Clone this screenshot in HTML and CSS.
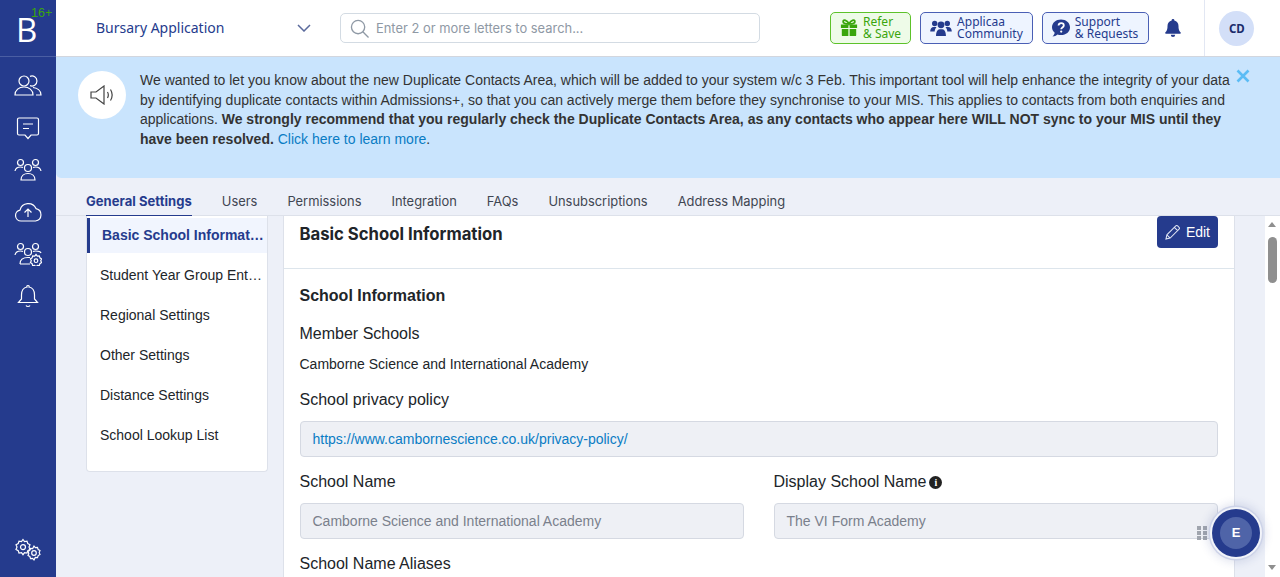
FILE: index.html
```html
<!DOCTYPE html>
<html lang="en">
  <head>
    <meta charset="UTF-8" />
    <meta name="viewport" content="width=device-width, initial-scale=1.0" />
    <title>General Settings</title>
    <link rel="stylesheet" href="styles.css">
  </head>
  <body>
    <aside class="sidebar">
      <div class="logo">
        <span class="logo-letter">B</span>
        <span class="logo-age">16+</span>
      </div>
      <nav class="side-icons">
        <svg viewBox="0 0 28 24"><circle cx="10" cy="7" r="5"/><path d="M1 21c0-5 4-8 9-8s9 3 9 8z"/><path d="M16 2.400a5 5 0 1 1 0 9.200"/><path d="M19 13.500c4 .5 8 3 8 7.500h-5"/></svg>
        <svg viewBox="0 0 24 24"><path d="M3 2h18a1.500 1.500 0 0 1 1.500 1.500v14a1.500 1.500 0 0 1-1.500 1.500h-6l-3 3.500-3-3.500H3a1.500 1.500 0 0 1-1.500-1.500v-14A1.500 1.500 0 0 1 3 2z"/><path d="M7 8h10M7 12.500h6"/></svg>
        <svg viewBox="0 0 28 24"><circle cx="6.500" cy="4.500" r="3"/><circle cx="21.500" cy="4.500" r="3"/><circle cx="14" cy="10" r="3.500"/><path d="M1 13c.5-2.500 2.500-4 5.500-4 1 0 2 .2 2.500.5M27 13c-.5-2.500-2.500-4-5.500-4-1 0-2 .2-2.500.5"/><path d="M7 22c0-4 3-6.500 7-6.500s7 2.500 7 6.500z"/></svg>
        <svg viewBox="0 0 28 24"><path d="M7 21a5.500 5.500 0 0 1-1-10.900A8.500 8.500 0 0 1 22 8.600a6.300 6.300 0 0 1-.5 12.400z"/><path d="M14 17V9M10.500 12.500 14 9l3.500 3.500"/></svg>
        <svg viewBox="0 0 28 24"><circle cx="6.500" cy="4.500" r="3"/><circle cx="21.500" cy="4.500" r="3"/><circle cx="14" cy="10" r="3.500"/><path d="M1 13c.5-2.500 2.500-4 5.500-4 1 0 2 .2 2.500.5M27 11c-.5-1.500-2.500-2-5.500-2-1 0-2 .2-2.500.5"/><path d="M6 22c0-4 3-6.500 8-6.500h2M6 22h10"/><path d="M22 12.500l1.300 1.600 2-.3.600 2 1.700 1.200-.9 1.800.9 1.800-1.700 1.100-.6 2-2-.3-1.300 1.600-1.300-1.600-2 .3-.6-2-1.700-1.100.9-1.800-.9-1.800 1.700-1.200.6-2 2 .3z"/><circle cx="22" cy="18.700" r="1.800"/></svg>
        <svg viewBox="0 0 24 24"><path d="M12 1.500a1 1 0 0 1 1 1.500c4 .7 5.500 4 5.500 8v4l3 3.500h-19l3-3.500v-4c0-4 1.500-7.300 5.500-8a1 1 0 0 1 1-1.500z"/><path d="M10 21.500c.8 1.300 3.200 1.300 4 0"/></svg>
      </nav>
      <svg class="side-gears" viewBox="0 0 28 24"><path d="M9 1.500l1.500 2 2.500-.3.800 2.400 2.200 1.200-1 2.300 1 2.300-2.200 1.200-.8 2.400-2.500-.3-1.500 2-1.500-2-2.500.3-.8-2.400L2 11.400l1-2.300-1-2.300 2.200-1.200L5 3.200l2.500.3z"/><circle cx="9" cy="9.100" r="2.500"/><path d="M20 8l1.300 1.700 2.200-.2.700 2.100 1.800 1-.8 2 .8 2-1.800 1-.7 2.100-2.200-.2L20 22l-1.300-1.700-2.200.2-.7-2.100-1.800-1 .8-2-.8-2 1.800-1 .7-2.100 2.200.2z"/><circle cx="20" cy="15" r="2.300"/></svg>
    </aside>

    <div class="main">
      <header class="topbar">
        <div class="app-select">
          <span>Bursary Application</span>
          <svg viewBox="0 0 14 8"><path d="M1 1l6 6 6-6"/></svg>
        </div>
        <div class="search">
          <svg viewBox="0 0 20 20"><circle cx="8.500" cy="8.500" r="7"/><path d="M13.500 13.500l6 6"/></svg>
          <span>Enter 2 or more letters to search...</span>
        </div>
        <a class="top-btn refer">
          <svg viewBox="0 0 20 20"><path d="M1 6h8.300v4H1zM10.700 6H19v4h-8.300zM2 11h7.300v8H3a1 1 0 0 1-1-1zM10.700 11H18v7a1 1 0 0 1-1 1h-6.300z" fill="#3aa50c"/><path d="M10 5.500C8 1 3.500 0 3.500 3c0 2 3 2.500 6.500 2.500s6.500-.5 6.500-2.500c0-3-4.500-2-6.500 2.500z" fill="none" stroke="#3aa50c" stroke-width="2"/></svg>
          <span>Refer<br>&amp; Save</span>
        </a>
        <a class="top-btn community">
          <svg viewBox="0 0 24 20"><circle cx="5" cy="5" r="3"/><circle cx="19" cy="5" r="3"/><circle cx="12" cy="6.500" r="3.800"/><path d="M0 14c0-3 1.500-5 4-5h3c-1 1.500-2 3-2 5zM24 14c0-3-1.500-5-4-5h-3c1 1.500 2 3 2 5zM6.500 19c0-4 1.500-7.500 4-7.500h3c2.500 0 4 3.500 4 7.500z"/></svg>
          <span>Applicaa<br>Community</span>
        </a>
        <a class="top-btn">
          <svg viewBox="0 0 18 18"><path d="M9 0.500c5 0 9 3.200 9 7.800s-4 7.800-9 7.800c-1.300 0-2.500-.2-3.500-.6C4.300 16.500 2.500 17.500.5 17.500c1-1 2-2.300 2.200-3.800C1 12.300 0 10.400 0 8.300 0 3.700 4 .5 9 .5z"/><path d="M6.500 6.500C6.700 5 7.800 4.200 9.200 4.200c1.500 0 2.600.9 2.600 2.200 0 2-2.600 2-2.600 3.800" fill="none" stroke="#fff" stroke-width="1.800"/><circle cx="9.200" cy="12.600" r="1.100" fill="#fff"/></svg>
          <span>Support<br>&amp; Requests</span>
        </a>
        <svg class="top-bell" viewBox="0 0 16 18"><path d="M8 0a1.300 1.300 0 0 1 1.300 1.500C12 2.100 13.500 4.300 13.500 7c0 4 1 5.300 2.200 6.500.4.500 0 1.300-.7 1.300H1c-.7 0-1.100-.8-.7-1.300C1.500 12.300 2.500 11 2.500 7c0-2.700 1.500-4.900 4.200-5.500A1.300 1.300 0 0 1 8 0zM5.800 15.800h4.400A2.200 2.200 0 0 1 8 18a2.200 2.200 0 0 1-2.200-2.200z"/></svg>
        <div class="user-box"><span class="avatar">CD</span></div>
      </header>

      <section class="banner">
        <div class="banner-icon">
          <svg viewBox="0 0 24 20"><path d="M1 7h5l8-6v18l-8-6H1z"/><path d="M17.500 7c1 1.800 1 4.200 0 6M20.500 4.500c2 3.300 2 7.700 0 11"/></svg>
        </div>
        <p class="banner-text">We wanted to let you know about the new Duplicate Contacts Area, which will be added to your system w/c 3 Feb. This important tool will help enhance the integrity of your data by identifying duplicate contacts within Admissions+, so that you can actively merge them before they synchronise to your MIS. This applies to contacts from both enquiries and applications. <b>We strongly recommend that you regularly check the Duplicate Contacts Area, as any contacts who appear here WILL NOT sync to your MIS until they have been resolved.</b> <a>Click here to learn more</a>.</p>
        <svg class="banner-close" viewBox="0 0 14 14"><path d="M1.500 1.500l11 11M12.500 1.500l-11 11"/></svg>
      </section>

      <nav class="tabs">
        <a class="tab active">General Settings</a>
        <a class="tab">Users</a>
        <a class="tab">Permissions</a>
        <a class="tab">Integration</a>
        <a class="tab">FAQs</a>
        <a class="tab">Unsubscriptions</a>
        <a class="tab">Address Mapping</a>
      </nav>

      <div class="content">
        <ul class="side-menu">
          <li class="active">Basic School Information</li>
          <li>Student Year Group Entry Settings</li>
          <li>Regional Settings</li>
          <li>Other Settings</li>
          <li>Distance Settings</li>
          <li>School Lookup List</li>
        </ul>

        <main class="card">
          <div class="card-head">
            <h1>Basic School Information</h1>
            <button class="edit-btn">
              <svg viewBox="0 0 16 16"><path d="M1 15l1-4.500L11.500 1a1.500 1.500 0 0 1 2 0l1.500 1.500a1.500 1.500 0 0 1 0 2L5.500 14zM10 2.500L13.500 6M2 10.500L5.500 14"/></svg>
              Edit
            </button>
          </div>
          <div class="card-body">
            <h2>School Information</h2>
            <div class="field-label">Member Schools</div>
            <div class="field-value">Camborne Science and International Academy</div>
            <div class="field-label">School privacy policy</div>
            <div class="input link-input">https://www.cambornescience.co.uk/privacy-policy/</div>
            <div class="field-row">
              <div>
                <div class="field-label">School Name</div>
                <div class="input">Camborne Science and International Academy</div>
              </div>
              <div>
                <div class="field-label">Display School Name<i class="info">i</i></div>
                <div class="input">The VI Form Academy</div>
              </div>
            </div>
            <div class="field-label">School Name Aliases</div>
          </div>
        </main>

        <div class="scrollbar">
          <span class="arrow up"></span>
          <span class="thumb"></span>
          <span class="arrow down"></span>
        </div>
      </div>
    </div>

    <div class="chat-widget">
      <svg class="chat-grip" viewBox="0 0 10 14"><path d="M0 0h4v4H0zM6 0h4v4H6zM0 5h4v4H0zM6 5h4v4H6zM0 10h4v4H0zM6 10h4v4H6z"/></svg>
      <span class="chat-ball"><span>E</span></span>
    </div>
  </body>
</html>
```

FILE: styles.css
```css
* {
  box-sizing: border-box;
}

html,
body {
  height: 100%;
}

body {
  display: flex;
  margin: 0;
  overflow: hidden;
  font-family: 'Liberation Sans', Arial, sans-serif;
  color: #212529;
  background: #edf0f8;
}

.sidebar {
  display: flex;
  flex-direction: column;
  flex: 0 0 56px;
  background: #253b8d;
}

.logo {
  position: relative;
  height: 57px;
  border-bottom: 1px solid #4a5ea3;
  font-family: 'Open Sans', sans-serif;
}

.logo-letter {
  position: absolute;
  left: 16px;
  top: 7px;
  color: #fff;
  font-size: 33px;
  font-weight: 400;
  line-height: 46px;
}

.logo-age {
  position: absolute;
  left: 31px;
  top: 6px;
  color: #3aa50c;
  font-family: 'Liberation Sans', sans-serif;
  font-size: 12.5px;
  line-height: 14px;
}

.side-icons {
  display: flex;
  flex-direction: column;
  align-items: center;
  gap: 18px;
  padding-top: 17px;
}

.side-icons svg,
.side-gears {
  width: 28px;
  height: 24px;
  fill: none;
  stroke: #fff;
  stroke-width: 1.2;
}

.side-gears {
  margin: auto auto 15px;
}

.main {
  display: flex;
  flex-direction: column;
  flex: 1;
  min-width: 0;
}

.topbar {
  display: flex;
  align-items: center;
  flex: 0 0 57px;
  padding-left: 40px;
  background: #fff;
  border-bottom: 1px solid #d2d6de;
}

.app-select {
  display: flex;
  align-items: center;
  justify-content: space-between;
  width: 215px;
  padding-bottom: 1px;
  color: #253b8d;
  font-family: 'Noto Sans', sans-serif;
  font-size: 14px;
}

.app-select svg {
  width: 14px;
  height: 8px;
  fill: none;
  stroke: #5a6a9c;
  stroke-width: 1.5;
}

.search {
  display: flex;
  align-items: center;
  gap: 7px;
  width: 420px;
  height: 30px;
  margin-left: 29px;
  padding-left: 9px;
  border: 1px solid #d3dbe3;
  border-radius: 5px;
  color: #8f99a5;
  font-family: Inter, sans-serif;
  font-size: 12.9px;
}

.search svg {
  width: 19px;
  height: 19px;
  fill: none;
  stroke: #8f99a5;
  stroke-width: 1.4;
}

.top-btn {
  display: flex;
  align-items: center;
  gap: 5px;
  height: 32px;
  margin-left: 9px;
  padding: 0 10px 0 9px;
  border: 1px solid #4a5fb5;
  border-radius: 5px;
  background: #eef4ff;
  color: #253b8d;
  font-family: 'Noto Sans', sans-serif;
  font-size: 12px;
  line-height: 12px;
}

.top-btn svg {
  flex: none;
  width: 18px;
  height: 18px;
  fill: #253b8d;
}

.top-btn.community {
  padding-right: 9px;
}

.top-btn.community svg {
  width: 22px;
}

.top-btn.refer {
  margin-left: 70px;
  padding-right: 9px;
  border-color: #5dc22a;
  background: #eefbe8;
  color: #3aa50c;
}

.top-bell {
  flex: none;
  width: 16px;
  height: 18px;
  margin-left: 16px;
  fill: #253b8d;
}

.user-box {
  display: flex;
  align-items: center;
  height: 56px;
  margin-left: 23px;
  padding-left: 14px;
  border-left: 1px solid #e2e7f3;
}

.avatar {
  display: flex;
  align-items: center;
  justify-content: center;
  width: 35px;
  height: 35px;
  border-radius: 50%;
  background: #d3dff8;
  color: #1c2c6b;
  font-family: 'Noto Sans', sans-serif;
  font-size: 11.5px;
  font-weight: 700;
}

.banner {
  position: relative;
  display: flex;
  flex: 0 0 121px;
  padding: 14px 48px 0 22px;
  background: #c9e4fd;
  border-radius: 0 0 0 5px;
}

.banner-icon {
  display: flex;
  align-items: center;
  justify-content: center;
  flex: none;
  width: 48px;
  height: 48px;
  border-radius: 50%;
  background: #fff;
}

.banner-icon svg {
  width: 24px;
  height: 20px;
  fill: none;
  stroke: #444;
  stroke-width: 1.2;
}

.banner-text {
  margin: 0 0 0 14px;
  color: #333;
  font-size: 14px;
  line-height: 19.6px;
}

.banner-text a {
  color: #0a7cc4;
}

.banner-close {
  position: absolute;
  top: 12px;
  right: 30px;
  width: 14px;
  height: 14px;
  fill: none;
  stroke: #5bbcf5;
  stroke-width: 2.6;
}

.tabs {
  display: flex;
  align-items: flex-end;
  gap: 30px;
  flex: 0 0 38px;
  padding-left: 30px;
  border-bottom: 1px solid #dde1ea;
  font-family: Inter, sans-serif;
  font-size: 12.9px;
}

.tab {
  padding-bottom: 5px;
  color: #3f4652;
  line-height: 16px;
}

.tab.active {
  margin-bottom: -1px;
  padding-bottom: 6px;
  border-bottom: 1px solid #253b8d;
  color: #253b8d;
  font-size: 13px;
  font-weight: 700;
  letter-spacing: 0.05px;
}

.content {
  display: flex;
  flex: 1;
  min-height: 0;
  padding-left: 30px;
  overflow: hidden;
}

.side-menu {
  flex: 0 0 182px;
  align-self: flex-start;
  min-width: 0;
  height: 256px;
  margin: 0;
  padding: 2px 0 0;
  list-style: none;
  background: #fff;
  border: 1px solid #dde1ea;
  border-top: 0;
  border-radius: 0 0 4px 4px;
  font-size: 14px;
}

.side-menu li {
  height: 40px;
  padding: 0 5px 0 13px;
  overflow: hidden;
  line-height: 38px;
  text-overflow: ellipsis;
  white-space: nowrap;
}

.side-menu li.active {
  height: 35px;
  padding: 0 3px 0 12px;
  line-height: 35px;
  margin-bottom: 3px;
  border-left: 3px solid #253b8d;
  background: #f1f5fe;
  color: #253b8d;
  font-weight: 700;
}

.card {
  flex: 0 0 952px;
  margin-left: 15px;
  background: #fff;
  border-left: 1px solid #dde1ea;
  border-right: 1px solid #dde1ea;
}

.card-head {
  display: flex;
  justify-content: space-between;
  height: 53px;
  padding: 0 16px 0 15.5px;
  border-bottom: 1px solid #dde5ec;
}

.card-head h1 {
  margin: 8px 0 0;
  font-family: Inter, sans-serif;
  font-size: 16.7px;
  font-weight: 700;
  line-height: 20px;
}

.edit-btn {
  display: flex;
  align-items: center;
  gap: 6px;
  height: 32px;
  padding: 0 8px;
  border: 0;
  border-radius: 4px;
  background: #253b8d;
  color: #fff;
  font-family: 'Liberation Sans', sans-serif;
  font-size: 14px;
}

.edit-btn svg {
  width: 15px;
  height: 15px;
  fill: none;
  stroke: #dfe4f3;
  stroke-width: 1.1;
}

.card-body {
  padding: 17px 16px 0 15.5px;
}

.card-body h2 {
  margin: 0 0 18px;
  font-size: 16px;
  font-weight: 700;
  line-height: 20px;
}

.field-label {
  margin-bottom: 11px;
  font-size: 16px;
  line-height: 20px;
}

.field-value {
  margin-top: -1px;
  margin-bottom: 16px;
  font-size: 14px;
  line-height: 20px;
}

.input {
  height: 36px;
  margin-bottom: 15px;
  padding-left: 12px;
  border: 1px solid #d5d9e2;
  border-radius: 4px;
  background: #eef0f5;
  color: #7a808c;
  font-size: 14px;
  line-height: 34px;
}

.link-input {
  color: #0a7cc4;
}

.field-row {
  display: grid;
  grid-template-columns: 444px 444px;
  gap: 30px;
}

.info {
  display: inline-block;
  width: 13px;
  height: 13px;
  margin-left: 3px;
  border-radius: 50%;
  background: #222;
  color: #fff;
  font-family: 'Liberation Serif', serif;
  font-size: 10px;
  font-style: normal;
  font-weight: 700;
  line-height: 13px;
  text-align: center;
  vertical-align: 1px;
}

.scrollbar {
  position: relative;
  flex: 0 0 15px;
  margin-left: auto;
  background: #fff;
}

.thumb {
  position: absolute;
  top: 21px;
  left: 3px;
  width: 9px;
  height: 46px;
  border-radius: 5px;
  background: #8f8f8f;
}

.arrow {
  position: absolute;
  left: 3px;
  border-left: 4.5px solid transparent;
  border-right: 4.5px solid transparent;
}

.arrow.up {
  top: 6px;
  border-bottom: 5px solid #8f8f8f;
}

.arrow.down {
  bottom: 7px;
  border-top: 5px solid #8f8f8f;
}

.chat-widget {
  position: absolute;
  left: 1197px;
  top: 506px;
  width: 68px;
  height: 56px;
}

.chat-grip {
  position: absolute;
  left: 0;
  top: 20px;
  width: 10px;
  height: 14px;
  fill: #a0a5ae;
}

.chat-ball {
  position: absolute;
  left: 15px;
  top: 3px;
  display: flex;
  align-items: center;
  justify-content: center;
  width: 48px;
  height: 48px;
  border-radius: 50%;
  background: #253b8d;
  box-shadow: 0 0 0 2px #f2f4fa, 0 0 0 3.5px #cdd3e8, 0 0 10px 5px rgba(37, 59, 141, 0.15);
}

.chat-ball span {
  width: 32px;
  height: 32px;
  border-radius: 50%;
  background: #4f64a8;
  color: #fff;
  font-size: 13px;
  font-weight: 700;
  line-height: 32px;
  text-align: center;
}
```
